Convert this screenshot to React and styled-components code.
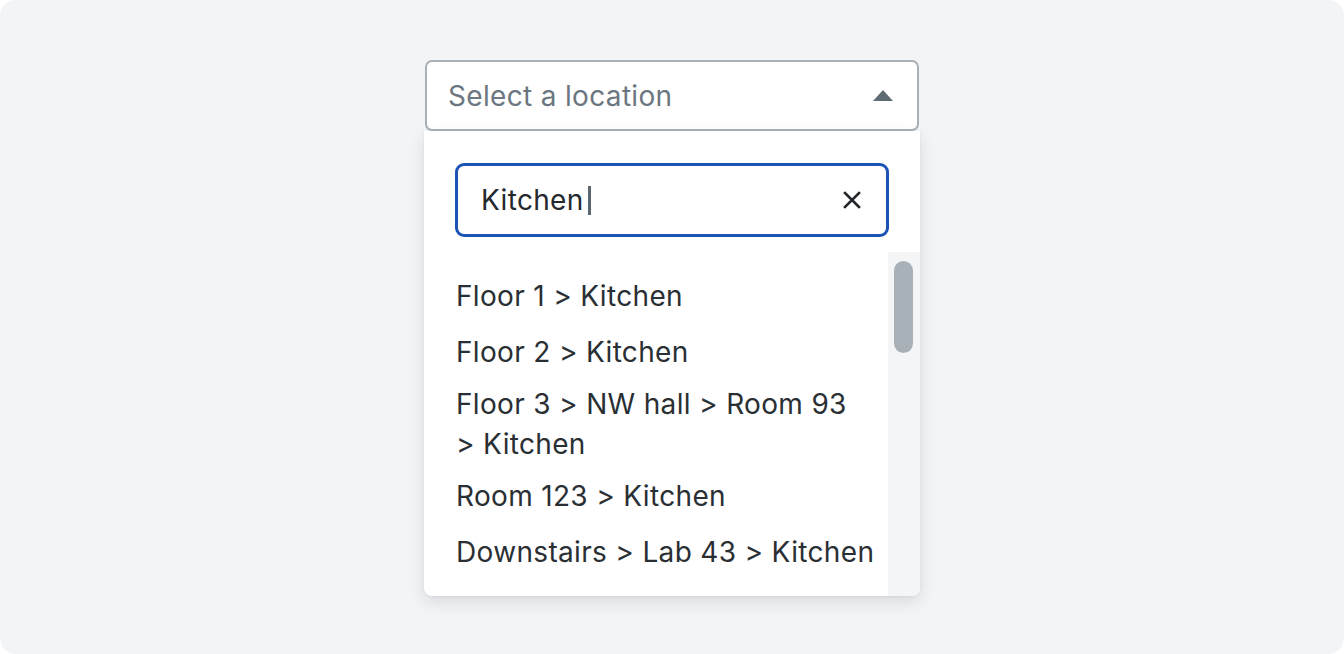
import React from "react";
import styled, { createGlobalStyle } from "styled-components";

const Global = createGlobalStyle`
  html, body { margin: 0; padding: 0; background: #ffffff; }
  body { font-family: Inter, "Noto Sans", sans-serif; }
  * { box-sizing: border-box; }
`;

const Page = styled.div`
  width: 1344px;
  height: 654px;
  background: #f3f4f6;
  border-radius: 16px;
  display: flex;
  justify-content: center;
  padding-top: 60px;
`;

const Combo = styled.div`
  width: 496px;
  display: flex;
  flex-direction: column;
`;

const Trigger = styled.div`
  margin: 0 1px;
  height: 71px;
  border: 2px solid #a9b1b8;
  border-radius: 7px;
  background: #ffffff;
  display: flex;
  align-items: center;
  justify-content: space-between;
  padding: 0 24px 0 21px;
  font-size: 28px;
  color: #6b7680;
  letter-spacing: 0.33px;
`;

const Panel = styled.div`
  background: #ffffff;
  border-radius: 0 0 8px 8px;
  box-shadow: 0 6px 16px rgba(30, 40, 50, 0.12), 0 1px 3px rgba(30, 40, 50, 0.06);
  padding-top: 32px;
  display: flex;
  flex-direction: column;
  overflow: hidden;
`;

const Search = styled.div`
  margin: 0 31px;
  height: 74px;
  border: 3px solid #1b54b5;
  border-radius: 9px;
  display: flex;
  align-items: center;
  padding: 0 25px 0 23px;
  font-size: 28px;
  letter-spacing: 0.33px;
  color: #24292e;
`;

const Typed = styled.span`
  flex: 1;
  display: flex;
  align-items: center;
`;

const Caret = styled.span`
  display: inline-block;
  width: 3px;
  height: 29px;
  margin-left: 4px;
  background: #5b6770;
`;

const ListRow = styled.div`
  margin-top: 15px;
  height: 344px;
  display: flex;
`;

const List = styled.ul`
  flex: 1;
  margin: 0;
  list-style: none;
  padding: 16px 11px 16px 32px;
  overflow: hidden;
`;

const Item = styled.li`
  min-height: 56px;
  padding: 4px 0;
  display: flex;
  align-items: center;
  font-size: 28px;
  line-height: 40px;
  color: #2a2f34;
  letter-spacing: 0.33px;
`;

const Track = styled.div`
  width: 32px;
  background: #f4f5f6;
  padding: 9px 7px 0 6px;
`;

const Thumb = styled.div`
  height: 92px;
  border-radius: 10px;
  background: #a9b1b8;
`;

const items = [
  ["Floor 1", "Kitchen"],
  ["Floor 2", "Kitchen"],
  ["Floor 3", "NW hall", "Room 93", "Kitchen"],
  ["Room 123", "Kitchen"],
  ["Downstairs", "Lab 43", "Kitchen"],
];

export default function App() {
  return (
    <>
      <Global />
      <Page>
        <Combo>
          <Trigger>
            <span>Select a location</span>
            <svg width="20" height="11" viewBox="0 0 20 11">
              <path d="M10 0 L20 11 L0 11 Z" fill="#5f6b73" />
            </svg>
          </Trigger>
          <Panel>
            <Search>
              <Typed>
                Kitchen
                <Caret />
              </Typed>
              <svg width="18" height="18" viewBox="0 0 18 18">
                <path
                  d="M2 2 L16 16 M16 2 L2 16"
                  stroke="#23272b"
                  strokeWidth="2.6"
                  strokeLinecap="square"
                />
              </svg>
            </Search>
            <ListRow>
              <List>
                {items.map((parts) => (
                  <Item key={parts.join("/")}>
                    <span>{parts.join(" >\u00a0")}</span>
                  </Item>
                ))}
              </List>
              <Track>
                <Thumb />
              </Track>
            </ListRow>
          </Panel>
        </Combo>
      </Page>
    </>
  );
}
